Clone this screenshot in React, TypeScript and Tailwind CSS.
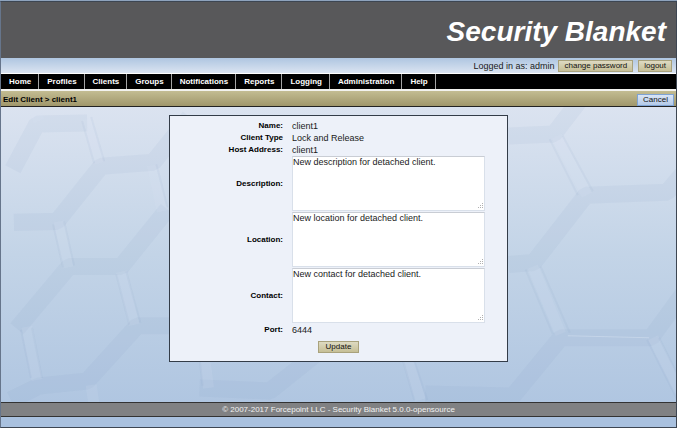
import React from "react";

const navItems = [
  "Home",
  "Profiles",
  "Clients",
  "Groups",
  "Notifications",
  "Reports",
  "Logging",
  "Administration",
  "Help",
];

const details = [
  { label: "Name:", value: "client1" },
  { label: "Client Type", value: "Lock and Release" },
  { label: "Host Address:", value: "client1" },
];

const notes = [
  { id: "description", label: "Description:", value: "New description for detached client." },
  { id: "location", label: "Location:", value: "New location for detached client." },
  { id: "contact", label: "Contact:", value: "New contact for detached client." },
];

const tanButton =
  "h-3 border border-[#a9a27c] bg-linear-to-b from-[#dedac2] to-[#c6bf96] text-[8px] leading-[10px] text-[#111]";

function Honeycomb() {
  return (
    <svg
      aria-hidden="true"
      className="absolute inset-0 h-full w-full"
      viewBox="0 108 677 294"
      preserveAspectRatio="xMidYMin slice"
      fill="none"
    >
      <path
        stroke="#7089b5"
        strokeOpacity="0.07"
        strokeWidth="17"
        strokeLinejoin="bevel"
        d="M14 170 38 125 88 124M15 223 58 222 102 167 154 163 190 118M18 329 70 267 122 267 168 210M12 400 40 386 88 381 138 326 172 326M508 137 553 135 580 100M508 265 533 263 585 196 666 193 682 174M504 406 560 338 650 338 682 294M200 388 270 391 314 356M425 394 510 396"
      />
      <path
        stroke="#dfe9f6"
        strokeOpacity="0.12"
        strokeWidth="11"
        d="M88 120 100 164M153 166 163 212M60 222 69 268M122 272 135 325M28 327 38 380M92 385 98 428M34 108 40 122M556 137 586 196M532 267 560 334M652 338 690 415M205 358 209 388M407 358 420 400"
      />
      <path
        stroke="#7089b5"
        strokeOpacity="0.07"
        strokeWidth="2"
        d="M92 118 105 162M83 122 95 164M157 165 168 208M54 225 64 268M65 222 75 266M127 272 141 323M117 275 130 325M22 330 32 378M33 328 43 378M562 137 592 192M549 140 577 196M540 267 569 333M525 270 552 334M658 338 694 410M646 340 684 415M200 358 203 386M402 358 414 400M413 358 427 400"
      />
      <path stroke="#dfe9f6" strokeOpacity="0.4" d="M567 336 648 338" />
    </svg>
  );
}

function ResizeGrip() {
  return (
    <svg
      aria-hidden="true"
      className="pointer-events-none absolute right-0.5 bottom-0.5 h-1.5 w-1.5"
      viewBox="0 0 6 6"
      fill="#b0b0b0"
    >
      <path d="M5 0h1v1H5zM3 2h1v1H3zM5 2h1v1H5zM1 4h1v1H1zM3 4h1v1H3zM5 4h1v1H5z" />
    </svg>
  );
}

export default function App() {
  return (
    <div className="flex min-h-screen flex-col border-t border-[#8ea3bd] bg-[#a9c1df] font-['Liberation_Sans',Arial,sans-serif] text-[#1a1a1a]">
      <div className="flex flex-1 flex-col border border-[#3d4652] border-l-[#66758b]">
        <header>
          <div className="flex h-14 items-center justify-end bg-[#58585a] pt-1 pr-2.5">
            <h1 className="text-[28px] leading-8 font-bold text-white italic">Security Blanket</h1>
          </div>
          <div className="flex h-4 items-center justify-end gap-1 border-b border-white bg-linear-to-b from-[#afc6e1] to-[#dbe4f1] pr-1">
            <span className="text-[9px] leading-3">Logged in as: admin</span>
            <button type="button" className={`${tanButton} px-[5px]`}>
              change password
            </button>
            <button type="button" className={`${tanButton} ml-px px-[5px]`}>
              logout
            </button>
          </div>
          <nav className="flex h-[15px] bg-black">
            {navItems.map((item) => (
              <a
                key={item}
                href="#"
                className="border-r border-[#a5a5a5] pr-[7px] pl-2 text-[8px] leading-[15px] font-bold text-white"
              >
                {item}
              </a>
            ))}
          </nav>
          <div className="flex h-[18px] items-center justify-between border-t-2 border-b border-t-[#f2f2ee] border-b-[#222] bg-linear-to-b from-[#c3bc92] to-[#a0976b] px-0.5 pt-0.5">
            <h2 className="text-[8px] leading-3 font-bold text-black">Edit Client &gt; client1</h2>
            <button
              type="button"
              className="h-3 border border-[#7fa3d4] bg-linear-to-b from-[#d9e5f6] to-[#b4cae8] px-[5px] text-[8px] leading-[10px] text-[#111]"
            >
              Cancel
            </button>
          </div>
        </header>

        <main className="relative flex-1 overflow-hidden bg-linear-to-b from-[#dbe3f0] via-[#c3d4e7] to-[#b0c6e1] pt-2 pb-10">
          <Honeycomb />
          <form
            className="relative mx-auto w-[339px] max-w-full border border-[#333c48] bg-[#edf1f9] pt-1 pb-[7px]"
            onSubmit={(event) => event.preventDefault()}
          >
            <div className="grid grid-cols-[113px_1fr] items-center gap-x-[9px]">
              {details.map(({ label, value }) => (
                <React.Fragment key={label}>
                  <span className="text-right text-[8px] leading-3 font-bold text-black">{label}</span>
                  <span className="text-[9px] leading-3">{value}</span>
                </React.Fragment>
              ))}
              {notes.map(({ id, label, value }) => (
                <React.Fragment key={id}>
                  <label htmlFor={id} className="text-right text-[8px] leading-3 font-bold text-black">
                    {label}
                  </label>
                  <div className="relative mb-px w-[193px] max-w-full">
                    <textarea
                      id={id}
                      defaultValue={value}
                      className="block h-[55px] w-full resize-none border border-[#d9e0ea] border-t-[#c9cdd4] bg-white text-[9px] leading-[11px]"
                    />
                    <ResizeGrip />
                  </div>
                </React.Fragment>
              ))}
              <span className="text-right text-[8px] leading-3 font-bold text-black">Port:</span>
              <span className="text-[9px] leading-3">6444</span>
            </div>
            <div className="mt-[5px] mb-px flex justify-center">
              <button type="submit" className={`${tanButton} px-[7px]`}>
                Update
              </button>
            </div>
          </form>
        </main>

        <footer className="flex flex-col">
          <p className="border-y border-[#333] bg-[#808183] text-center text-[8px] leading-[13px] text-[#f2f2f2]">
            © 2007-2017 Forcepoint LLC - Security Blanket 5.0.0-opensource
          </p>
          <div className="h-2.5 bg-[#a9c1df]" />
        </footer>
      </div>
    </div>
  );
}
